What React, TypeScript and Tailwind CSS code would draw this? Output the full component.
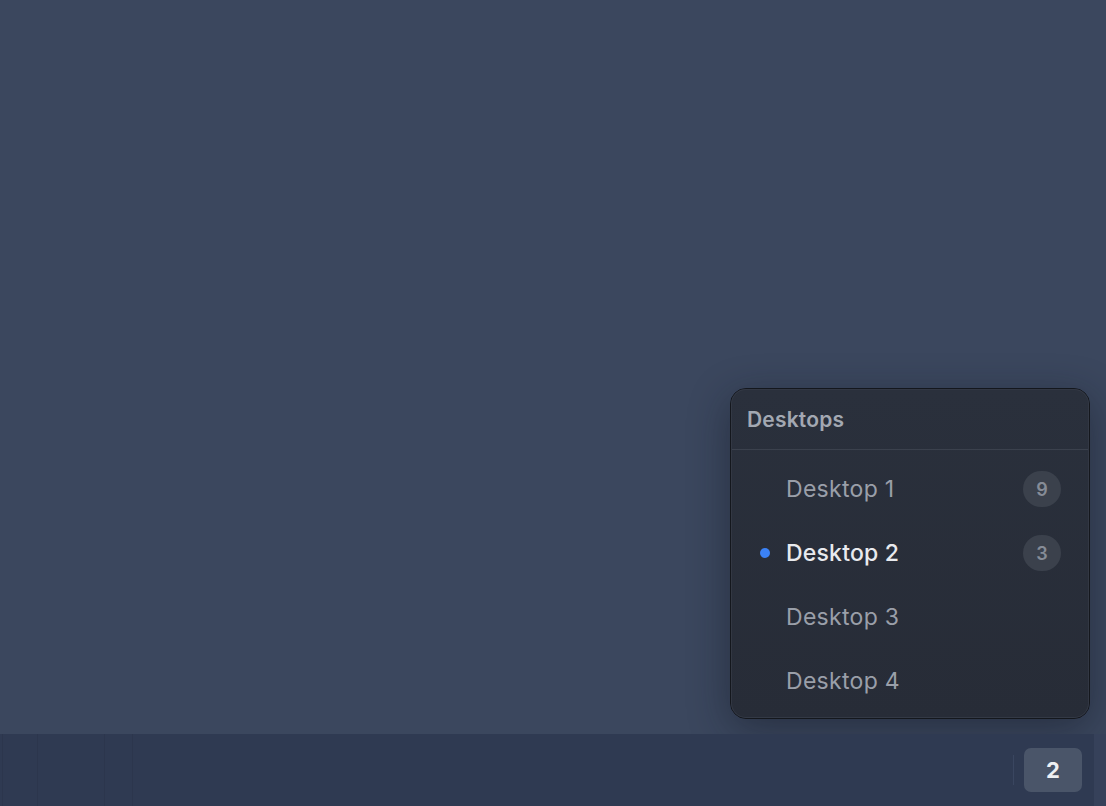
import { useState } from 'react';

const desktops = [
    { id: 1, name: 'Desktop 1', windows: 9 },
    { id: 2, name: 'Desktop 2', windows: 3 },
    { id: 3, name: 'Desktop 3', windows: 0 },
    { id: 4, name: 'Desktop 4', windows: 0 },
];

export default function App() {
    const [active, setActive] = useState(2);
    const [open, setOpen] = useState(true);

    return (
        <div className="relative w-[1106px] h-[806px] overflow-hidden bg-[#3b475e] font-['Inter','Liberation_Sans',sans-serif]">
            {/* Desktop switcher popup */}
            {open && (
                <div className="absolute left-[730px] top-[388px] w-[360px] rounded-[16px] border border-[#14171d] bg-[#282d39] shadow-[0_10px_40px_rgba(15,20,30,0.45)]">
                    <div className="rounded-[15px] border border-[#3a404b]/60 overflow-hidden bg-gradient-to-b from-[#2a303c] to-[#272c37]">
                        <div className="h-[60px] flex items-center px-[15px] border-b border-[#3b414d]">
                            <span className="text-[21px] font-semibold text-[#a3a8b2] tracking-[0.2px]">Desktops</span>
                        </div>
                        <div className="pt-[7px] pb-[4px]">
                            {desktops.map((d) => {
                                const isActive = d.id === active;
                                return (
                                    <button
                                        key={d.id}
                                        onClick={() => setActive(d.id)}
                                        className="w-full h-[64px] flex items-center pl-[28px] pr-[27px] text-left"
                                    >
                                        <span className="w-[26px] flex items-center">
                                            {isActive && <span className="w-[10px] h-[10px] rounded-full bg-[#3b82f6]" />}
                                        </span>
                                        <span className={isActive ? 'flex-1 text-[23px] font-medium text-[#e8eaee] tracking-[0.2px]' : 'flex-1 text-[23px] font-normal text-[#9a9fa9] tracking-[0.3px]'}>
                                            {d.name}
                                        </span>
                                        {d.windows > 0 && (
                                            <span className="w-[38px] h-[36px] rounded-full bg-[#3b414c] flex items-center justify-center text-[18px] font-semibold text-[#868c97]">
                                                {d.windows}
                                            </span>
                                        )}
                                    </button>
                                );
                            })}
                        </div>
                    </div>
                </div>
            )}

            {/* Taskbar */}
            <div className="absolute left-0 bottom-0 w-[1094px] h-[72px] bg-[#2f3a52] flex items-center">
                <div className="flex h-full opacity-60">
                    <div className="w-[3px] h-full border-r border-[#2b354b]" />
                    <div className="w-[35px] h-full border-r border-[#2b354b]" />
                    <div className="w-[67px] h-full border-r border-[#2b354b]" />
                    <div className="w-[28px] h-full border-r border-[#2b354b]" />
                </div>
                <div className="flex-1" />
                <div className="w-px h-[30px] bg-[#3a4660] mr-[10px]" />
                <button
                    onClick={() => setOpen(!open)}
                    className="w-[58px] h-[44px] rounded-[7px] bg-[#4a5569] flex items-center justify-center text-[22px] font-bold text-[#eef0f3] mr-[12px]"
                >
                    {active}
                </button>
            </div>
            <div className="absolute right-0 bottom-0 w-[12px] h-[72px] bg-[#36415a]" />
        </div>
    );
}
